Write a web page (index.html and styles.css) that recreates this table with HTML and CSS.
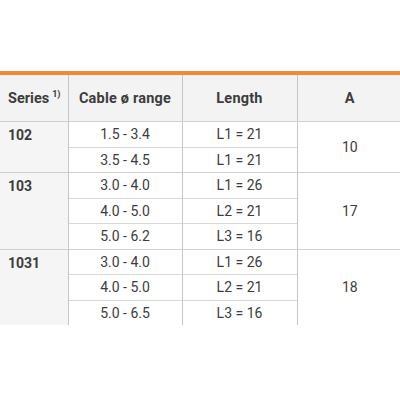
FILE: index.html
```html
<!DOCTYPE html>
<html>
<head>
<meta charset="utf-8">
<link rel="stylesheet" href="styles.css">
</head>
<body>
<div class="page">
<table class="spec">
  <colgroup>
    <col class="c-series">
    <col class="c-range">
    <col class="c-len">
    <col class="c-a">
  </colgroup>
  <thead>
    <tr>
      <th class="series">Series<sup>1)</sup></th>
      <th>Cable ø range</th>
      <th>Length</th>
      <th>A</th>
    </tr>
  </thead>
  <tbody>
    <tr class="group-start">
      <td class="series" rowspan="2">102</td>
      <td>1.5 - 3.4</td>
      <td>L1 = 21</td>
      <td class="a" rowspan="2">10</td>
    </tr>
    <tr>
      <td>3.5 - 4.5</td>
      <td>L1 = 21</td>
    </tr>
    <tr class="group-start">
      <td class="series" rowspan="3">103</td>
      <td>3.0 - 4.0</td>
      <td>L1 = 26</td>
      <td class="a" rowspan="3">17</td>
    </tr>
    <tr>
      <td>4.0 - 5.0</td>
      <td>L2 = 21</td>
    </tr>
    <tr>
      <td>5.0 - 6.2</td>
      <td>L3 = 16</td>
    </tr>
    <tr class="group-start">
      <td class="series" rowspan="3">1031</td>
      <td>3.0 - 4.0</td>
      <td>L1 = 26</td>
      <td class="a" rowspan="3">18</td>
    </tr>
    <tr>
      <td>4.0 - 5.0</td>
      <td>L2 = 21</td>
    </tr>
    <tr>
      <td>5.0 - 6.5</td>
      <td>L3 = 16</td>
    </tr>
  </tbody>
</table>
</div>
</body>
</html>
```

FILE: styles.css
```css
html, body {
  margin: 0;
  padding: 0;
  background: #ffffff;
}
.page {
  padding-top: 71px;
}
.spec {
  width: 402px;
  border-collapse: collapse;
  table-layout: fixed;
  font-family: Roboto, "Liberation Sans", sans-serif;
  font-size: 14px;
  color: #3c3c3c;
  border-top: 4px solid #ef8a33;
}
.c-series { width: 68px; }
.c-range { width: 114px; }
.c-len { width: 115px; }
.c-a { width: 105px; }
.spec th {
  height: 46px;
  padding: 0;
  background: #f3f3f3;
  font-size: 14.5px;
  font-weight: 700;
  letter-spacing: 0.2px;
  text-align: center;
  border-bottom: 1px solid #cfcfcf;
  border-left: 1px solid #c6c6c6;
}
.spec th.series {
  text-align: left;
  padding-left: 8px;
  border-left: none;
  letter-spacing: 0;
}
.spec th sup {
  font-size: 9px;
  margin-left: 3px;
  vertical-align: 6px;
  line-height: 0;
}
.spec td {
  height: 24.5px;
  padding: 0;
  text-align: center;
  border-top: 1px solid #d8d8d8;
  border-left: 1px solid #c6c6c6;
  line-height: 16px;
}
.spec td.series {
  background: #f5f5f5;
  text-align: left;
  vertical-align: top;
  padding: 5px 0 0 8px;
  font-weight: 700;
  border-left: none;
}
.spec td.a {
  vertical-align: middle;
}
.spec tr.group-start td {
  border-top: 1px solid #cfcfcf;
}
```
